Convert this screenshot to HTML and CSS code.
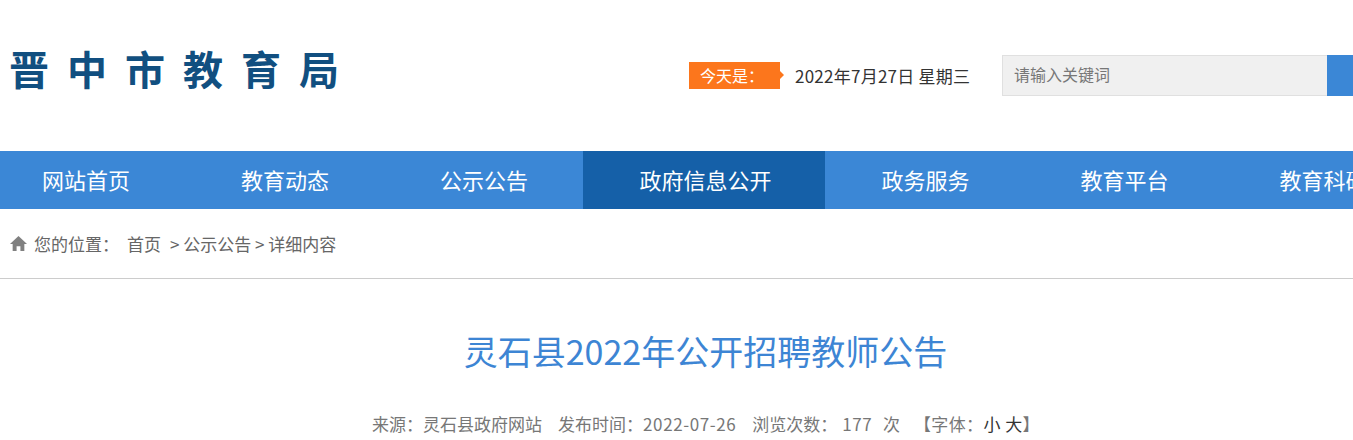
FILE: index.html

```html
<!DOCTYPE html>
<html lang="zh-CN">
<head>
  <meta charset="UTF-8">
  <meta name="viewport" content="width=device-width, initial-scale=1.0">
  <title>灵石县2022年公开招聘教师公告</title>
  <link rel="stylesheet" href="styles.css">
</head>
<body>
  <div class="header">
    <div class="logo">晋中市教育局</div>
    <div class="today">
      <span class="today-tag">今天是：</span>
      <span class="today-date">2022年7月27日 星期三</span>
    </div>
    <div class="search">
      <input class="search-input" type="text" placeholder="请输入关键词">
      <button class="search-btn" aria-label="搜索"></button>
    </div>
  </div>
  <ul class="nav">
    <li>网站首页</li>
    <li>教育动态</li>
    <li>公示公告</li>
    <li class="active">政府信息公开</li>
    <li>政务服务</li>
    <li>教育平台</li>
    <li>教育科研</li>
  </ul>
  <div class="crumb">
    <svg class="home-icon" width="17" height="15" viewBox="0 0 16 14"><path fill="#808080" d="M8 0 16 7.500H13.500V14H9.800V9.500H6.200V14H2.500V7.500H0z"/></svg>
    <span class="crumb-label">您的位置：</span>
    <span class="crumb-home">首页</span>
    <span>&gt; 公示公告 &gt; 详细内容</span>
  </div>
  <div class="article">
    <h1 class="title">灵石县2022年公开招聘教师公告</h1>
    <div class="meta">
      <span>来源：灵石县政府网站</span>
      <span>发布时间：<span class="num">2022-07-26</span></span>
      <span class="views">浏览次数： <span class="num count">177</span> &nbsp;次</span>
      <span class="font-size">【字体：<b class="size">小</b> <b class="size">大</b>】</span>
    </div>
  </div>
</body>
</html>
```

FILE: styles.css

```css
html, body {
  margin: 0;
  padding: 0;
  overflow: hidden;
}

body {
  font-family: "Noto Sans CJK SC", "Liberation Sans", sans-serif;
  color: #666;
  background: #fff;
}

.header {
  display: flex;
  align-items: center;
  height: 151px;
  padding-left: 10px;
}

.logo {
  flex-shrink: 0;
  width: 680px;
  margin: -16px 0 0 -1px;
  font-size: 40px;
  font-weight: 700;
  letter-spacing: 18px;
  line-height: 44px;
  color: #114f80;
  white-space: nowrap;
}

.today {
  flex-shrink: 0;
  display: flex;
  align-items: center;
  width: 313px;
  margin-top: -1px;
}

.today-tag {
  position: relative;
  width: 91px;
  height: 27px;
  padding-left: 11px;
  box-sizing: border-box;
  font-size: 16px;
  line-height: 27px;
  color: #fff;
  background: #fc761c;
}

.today-tag::after {
  content: "";
  position: absolute;
  right: -4px;
  top: 9px;
  border-left: 4px solid #fc761c;
  border-top: 4px solid transparent;
  border-bottom: 4px solid transparent;
}

.today-date {
  margin-left: 15px;
  font-size: 17px;
  letter-spacing: 0.25px;
  color: #333;
  white-space: nowrap;
}

.search {
  display: flex;
  flex-shrink: 0;
  margin-top: -1px;
}

.search-input {
  width: 325px;
  height: 41px;
  padding: 0 11px 2px;
  box-sizing: border-box;
  border: 1px solid #e0e0e0;
  border-right: none;
  background: #f0f0f0;
  font-family: inherit;
  font-size: 16px;
}

.search-input::placeholder {
  color: #777;
  opacity: 1;
}

.search-btn {
  width: 60px;
  height: 41px;
  border: none;
  background: #3b87d6;
}

.nav {
  display: flex;
  height: 58px;
  margin: 0;
  padding: 0;
  list-style: none;
  background: #3b87d6;
  white-space: nowrap;
}

.nav li {
  flex-shrink: 0;
  padding: 0 55.5px;
  font-size: 22px;
  line-height: 56px;
  color: #fff;
}

.nav li:first-child {
  margin-left: -13.5px;
}

.nav li.active {
  margin: 0 1.5px 0 -1px;
  padding: 0 53px 0 57px;
  background: #1560a8;
}

.crumb {
  display: flex;
  align-items: center;
  height: 69px;
  padding-left: 10px;
  border-bottom: 1px solid #ccc;
  font-size: 17px;
  color: #666;
}

.home-icon {
  margin-right: 7px;
}

.crumb-home {
  margin: 0 9px 0 8px;
}

.article {
  margin-left: 58px;
  text-align: center;
}

.title {
  margin: 48px 0 0;
  font-size: 34px;
  font-weight: 400;
  line-height: 48px;
  color: #3d85d4;
}

.meta {
  display: flex;
  justify-content: center;
  gap: 16px;
  margin: 37px 0 0 1px;
  font-size: 17px;
  line-height: 24px;
  color: #777;
  white-space: pre;
}

.num {
  letter-spacing: 0.6px;
}

.count {
  margin: 0 3px 0 1px;
}

.views {
  margin-right: -2px;
}

.font-size {
  letter-spacing: 0.4px;
}

.size {
  font-weight: 400;
  color: #333;
}
```
